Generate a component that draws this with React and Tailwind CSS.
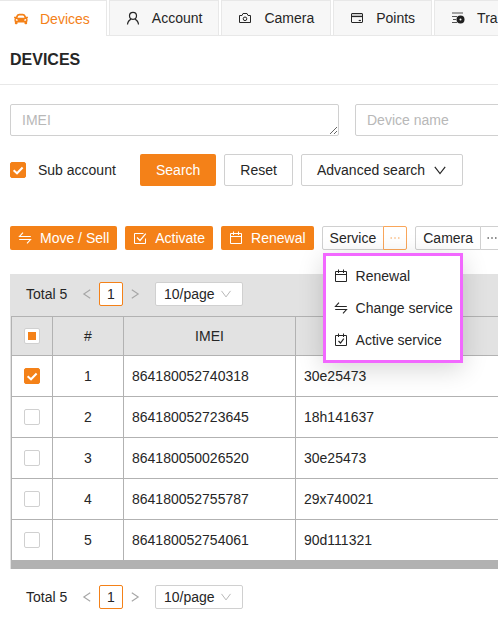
import React, { useEffect, useRef, useState } from "react";
import { AiOutlineEllipsis } from "react-icons/ai";
import { FaCar } from "react-icons/fa";

function LineIcon({ children }) {
  return (
    <svg
      viewBox="0 0 14 14"
      className="h-[14px] w-[14px] shrink-0"
      fill="none"
      stroke="currentColor"
      aria-hidden="true"
    >
      {children}
    </svg>
  );
}

function UserIcon() {
  return (
    <LineIcon>
      <circle cx="7" cy="4.800" r="3.500" strokeWidth="1.2" />
      <path d="M1.500 13.500C1.700 10.800 3 9.100 5.300 8.100M12.500 13.500C12.300 10.800 11 9.100 8.700 8.100" strokeWidth="1.2" />
    </LineIcon>
  );
}

function CameraIcon() {
  return (
    <LineIcon>
      <path d="M1.500 4.500h2.500l1-2h4l1 2h2.500v7h-11z" strokeLinejoin="round" />
      <circle cx="7" cy="7.800" r="1.800" />
    </LineIcon>
  );
}

function CardIcon() {
  return (
    <LineIcon>
      <rect x="1.5" y="2.500" width="11" height="9" rx="0.5" />
      <rect x="2" y="3" width="10" height="2" fill="#d0d0d0" stroke="none" />
      <path d="M1.500 5.500h11" strokeWidth="1.2" />
      <path d="M8.700 9.500h2.200" strokeWidth="1.2" />
    </LineIcon>
  );
}

function TrackIcon() {
  return (
    <LineIcon>
      <path d="M1 2h11" stroke="#8c8c8c" strokeWidth="1.600" />
      <path d="M1 5.500h5M2 8.500h3M1 11.500h5" stroke="#555" />
      <circle cx="9.500" cy="8.500" r="4" fill="#1f1f1f" stroke="none" />
      <circle cx="9.500" cy="8.500" r="1" fill="#fff" stroke="none" />
    </LineIcon>
  );
}

function SwapIcon() {
  return (
    <LineIcon>
      <path d="M12.800 5.500H1.500L5 1.700M1.200 8.500h11.300L9 12.300" strokeWidth="1.1" />
    </LineIcon>
  );
}

function CalendarIcon() {
  return (
    <LineIcon>
      <path d="M1.500 2.500h11v10h-11zM1.500 5.500h11M4.500 0.500v3.500M9.500 0.500v3.500" strokeLinejoin="round" />
    </LineIcon>
  );
}

function CalendarCheckIcon() {
  return (
    <LineIcon>
      <path d="M1.500 2.500h11v10h-11zM4.500 0.500v3.500M9.500 0.500v3.500" strokeLinejoin="round" />
      <path d="M4.500 8 6.500 10 9.800 5.700" strokeWidth="1.2" />
    </LineIcon>
  );
}

function CheckBoxIcon() {
  return (
    <LineIcon>
      <path d="M10.500 2.500h-9v10h11v-5" strokeLinejoin="round" />
      <path d="M4 6.500 7 9.500 12.800 2.700" strokeWidth="1.2" />
    </LineIcon>
  );
}

function DownIcon() {
  return (
    <LineIcon>
      <path d="M1.800 3.800 7 10.500 12.200 3.800" strokeWidth="1.2" />
    </LineIcon>
  );
}

function SmallDownIcon() {
  return (
    <LineIcon>
      <path d="M2.500 3.900 7 9.900 11.500 3.900" />
    </LineIcon>
  );
}

const tabs = [
  { name: "Devices", icon: <FaCar size={14} />, active: true },
  { name: "Account", icon: <UserIcon /> },
  { name: "Camera", icon: <CameraIcon /> },
  { name: "Points", icon: <CardIcon /> },
  { name: "Tra", icon: <TrackIcon /> },
];

const devices = [
  { imei: "864180052740318", name: "30e25473", checked: true },
  { imei: "864180052723645", name: "18h141637" },
  { imei: "864180050026520", name: "30e25473" },
  { imei: "864180052755787", name: "29x740021" },
  { imei: "864180052754061", name: "90d111321" },
];

function Checkbox({ id, label, defaultChecked = false, partial = false }) {
  const ref = useRef(null);
  const [on, setOn] = useState(defaultChecked);
  useEffect(() => {
    ref.current.indeterminate = partial;
  }, [partial]);
  return (
    <span className="grid h-4 w-4 shrink-0">
      <input
        ref={ref}
        id={id}
        type="checkbox"
        aria-label={label}
        checked={on}
        onChange={(e) => setOn(e.target.checked)}
        className="col-start-1 row-start-1 h-4 w-4 appearance-none rounded-xs border border-[#d0d0d0] bg-white checked:border-[#f48118] checked:bg-[#f48118]"
      />
      {partial && (
        <span className="pointer-events-none col-start-1 row-start-1 h-2 w-2 place-self-center bg-[#f48118]" />
      )}
      {on && (
        <svg
          viewBox="0 0 16 16"
          fill="none"
          stroke="#fff"
          strokeWidth="2"
          className="pointer-events-none col-start-1 row-start-1 h-4 w-4"
          aria-hidden="true"
        >
          <path d="M3.600 8.300 7 11.300 12.600 5.500" />
        </svg>
      )}
    </span>
  );
}

function Pager() {
  return (
    <div className="flex h-6 items-center pl-4">
      <span className="w-[54px]">Total 5</span>
      <button type="button" aria-label="Previous page" className="flex w-[19px] text-[#a6a6a6]">
        <LineIcon>
          <path d="M10.200 2.700 3.800 7l6.400 4.300" strokeWidth="1.1" />
        </LineIcon>
      </button>
      <button
        type="button"
        className="h-6 w-6 rounded-xs border border-[#f48118] bg-white text-center leading-[22px]"
      >
        1
      </button>
      <button type="button" aria-label="Next page" className="flex w-6 justify-center text-[#a6a6a6]">
        <LineIcon>
          <path d="M3.800 2.700 10.200 7l-6.400 4.300" strokeWidth="1.1" />
        </LineIcon>
      </button>
      <div className="ml-2 grid w-[88px] items-center">
        <select
          aria-label="Rows per page"
          className="col-start-1 row-start-1 h-6 w-full appearance-none rounded-xs border border-[#d0d0d0] bg-white pl-2 leading-[22px]"
        >
          <option>10/page</option>
          <option>20/page</option>
        </select>
        <span className="pointer-events-none col-start-1 row-start-1 mr-[10px] justify-self-end text-[#b8b8b8]">
          <SmallDownIcon />
        </span>
      </div>
    </div>
  );
}

function PrimaryAction({ icon, children }) {
  return (
    <button
      type="button"
      className="flex h-6 shrink-0 items-center gap-2 rounded-xs bg-[#f48118] px-2 text-white"
    >
      {icon}
      {children}
    </button>
  );
}

function MenuItem({ icon, children }) {
  return (
    <button type="button" role="menuitem" className="flex h-8 items-center gap-2 pl-2 whitespace-nowrap">
      {icon}
      {children}
    </button>
  );
}

export default function App() {
  return (
    <div className="w-full overflow-hidden bg-white pb-3 font-['Liberation_Sans',Arial,sans-serif] text-sm text-[#262626]">
      <nav className="flex h-9 gap-[2px] border-b border-[#e8e8e8]">
        {tabs.map((t) => (
          <button
            key={t.name}
            type="button"
            className={
              t.active
                ? "-mb-px -ml-[3px] flex h-9 shrink-0 items-center gap-3 border border-b-0 border-[#e8e8e8] bg-white px-4 text-[#f48118]"
                : "flex h-[35px] shrink-0 items-center gap-3 border border-b-0 border-[#e8e8e8] bg-[#f7f7f7] px-4"
            }
          >
            {t.icon}
            {t.name}
          </button>
        ))}
      </nav>

      <header className="flex h-[49px] items-center border-b border-[#e8e8e8] px-[10px]">
        <h1 className="text-base font-bold">DEVICES</h1>
      </header>

      <main className="pl-[10px]">
        <form onSubmit={(e) => e.preventDefault()}>
          <div className="flex gap-4 pt-[19px]">
            <textarea
              aria-label="IMEI"
              placeholder="IMEI"
              className="block h-8 w-[329px] shrink-0 resize rounded-xs border border-[#d0d0d0] px-[11px] py-[5px] leading-5 placeholder:text-[#b8b8b8]"
            />
            <input
              type="text"
              aria-label="Device name"
              placeholder="Device name"
              className="h-8 w-[329px] shrink-0 rounded-xs border border-[#d0d0d0] px-[11px] placeholder:text-[#b8b8b8]"
            />
          </div>

          <div className="flex items-center gap-2 pt-[18px]">
            <div className="flex w-[122px] items-center gap-3">
              <Checkbox id="sub-account" label="Sub account" defaultChecked />
              <label htmlFor="sub-account">Sub account</label>
            </div>
            <button type="submit" className="h-8 rounded-xs bg-[#f48118] px-4 text-white">
              Search
            </button>
            <button type="reset" className="h-8 rounded-xs border border-[#d0d0d0] bg-white px-[15px]">
              Reset
            </button>
            <button
              type="button"
              className="flex h-8 items-center gap-2 rounded-xs border border-[#d0d0d0] bg-white px-[15px]"
            >
              Advanced search
              <DownIcon />
            </button>
          </div>
        </form>

        <div className="flex gap-2 pt-10">
          <PrimaryAction icon={<SwapIcon />}>Move / Sell</PrimaryAction>
          <PrimaryAction icon={<CheckBoxIcon />}>Activate</PrimaryAction>
          <PrimaryAction icon={<CalendarIcon />}>Renewal</PrimaryAction>

          <div className="relative flex shrink-0">
            <button type="button" className="h-6 rounded-l-xs border border-[#d0d0d0] bg-white px-[7px]">
              Service
            </button>
            <button
              type="button"
              aria-label="More service actions"
              aria-expanded="true"
              className="-ml-px flex h-6 w-6 items-center justify-center rounded-r-xs border border-[#f9a65a] bg-white text-[#f9a65a]"
            >
              <AiOutlineEllipsis size={14} />
            </button>
            <div
              role="menu"
              className="absolute top-[27px] left-px z-10 flex w-[140px] flex-col border-3 border-[#f268ff] bg-white py-1 shadow-[0_6px_24px_rgba(0,0,0,0.16)]"
            >
              <MenuItem icon={<CalendarIcon />}>Renewal</MenuItem>
              <MenuItem icon={<SwapIcon />}>Change service</MenuItem>
              <MenuItem icon={<CalendarCheckIcon />}>Active service</MenuItem>
            </div>
          </div>

          <div className="flex shrink-0">
            <button type="button" className="h-6 rounded-l-xs border border-[#d0d0d0] bg-white px-[7px]">
              Camera
            </button>
            <button
              type="button"
              aria-label="More camera actions"
              className="-ml-px flex h-6 w-6 items-center justify-center rounded-r-xs border border-[#d0d0d0] bg-white"
            >
              <AiOutlineEllipsis size={14} />
            </button>
          </div>
        </div>

        <section className="mt-6">
          <div className="bg-[#e2e2e2] pt-2 pb-[10px]">
            <Pager />
          </div>
          <div className="border-l border-[#e2e2e2]">
            <table className="w-full table-fixed border-separate border-spacing-0 border-t border-l border-[#b2b2b2]">
              <colgroup>
                <col className="w-[41px]" />
                <col className="w-[71px]" />
                <col className="w-[172px]" />
                <col />
              </colgroup>
              <thead>
                <tr className="h-[39px] bg-[#e2e2e2]">
                  <th className="border-r border-b border-[#b2b2b2] p-0">
                    <div className="flex justify-center">
                      <Checkbox id="select-all" label="Select all devices" partial />
                    </div>
                  </th>
                  <th className="border-r border-b border-[#b2b2b2] p-0 font-normal">#</th>
                  <th className="border-r border-b border-[#b2b2b2] p-0 font-normal">IMEI</th>
                  <th aria-label="Device name" className="border-b border-[#b2b2b2] p-0" />
                </tr>
              </thead>
              <tbody>
                {devices.map((d, i) => (
                  <tr key={d.imei} className="h-[41px]">
                    <td className="border-r border-b border-[#b2b2b2] p-0">
                      <div className="flex justify-center">
                        <Checkbox
                          id={"device-" + (i + 1)}
                          label={"Select device " + (i + 1)}
                          defaultChecked={d.checked}
                        />
                      </div>
                    </td>
                    <td className="border-r border-b border-[#b2b2b2] p-0 text-center">{i + 1}</td>
                    <td className="border-r border-b border-[#b2b2b2] py-0 pr-0 pl-2">{d.imei}</td>
                    <td className="border-b border-[#b2b2b2] py-0 pr-0 pl-2">{d.name}</td>
                  </tr>
                ))}
              </tbody>
            </table>
            <div className="h-2 bg-[#b2b2b2]" />
          </div>
          <div className="pt-4">
            <Pager />
          </div>
        </section>
      </main>
    </div>
  );
}
